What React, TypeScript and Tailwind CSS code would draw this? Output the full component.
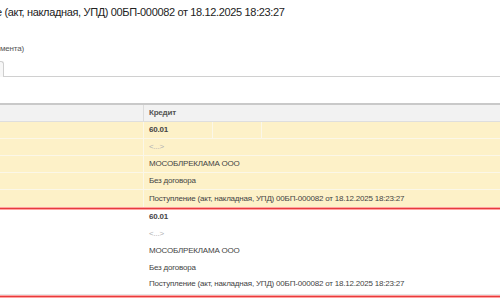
import React from 'react';

const doc = 'Поступление (акт, накладная, УПД) 00БП-000082 от 18.12.2025 18:23:27';

function Row({ children, yellow, last }: { children: React.ReactNode; yellow?: boolean; last?: boolean }) {
  return (
    <div className={`flex h-[17px] ${yellow && !last ? 'border-b border-[#fbf7e8]' : ''} ${!yellow && last ? 'border-b border-[#e6e6e6]' : ''}`}>
      <div className={`w-[144px] shrink-0 ${yellow ? 'border-r border-[#fbf7e8]' : ''}`} />
      <div className={`flex flex-1 items-center ${yellow ? '' : 'pb-[4px]'}`}>{children}</div>
    </div>
  );
}

function Entry({ yellow }: { yellow?: boolean }) {
  return (
    <div className={yellow ? 'bg-[#fdf1c8]' : 'bg-white'}>
      <Row yellow={yellow}>
        <div className={`flex h-full w-[69px] items-center pl-[5px] font-bold ${yellow ? 'border-r border-[#fbf7e8]' : ''}`}>60.01</div>
        <div className={`h-full w-[49px] ${yellow ? 'border-r border-[#fbf7e8]' : ''}`} />
      </Row>
      <Row yellow={yellow}>
        <span className="pl-[5px] text-[#b0b0b0]">&lt;...&gt;</span>
      </Row>
      <Row yellow={yellow}>
        <span className="pl-[5px]">МОСОБЛРЕКЛАМА ООО</span>
      </Row>
      <Row yellow={yellow}>
        <span className="pl-[5px]">Без договора</span>
      </Row>
      <Row yellow={yellow} last>
        <span className="pl-[5px]">{doc}</span>
      </Row>
    </div>
  );
}

export default function App() {
  return (
    <div className="h-[300px] w-[500px] overflow-hidden bg-white font-[family-name:'Liberation_Sans',Arial,sans-serif] text-[#333]">
      <div className="flex h-[25px] items-center whitespace-nowrap text-[11px] tracking-[-0.35px] text-[#222]">
        <span className="ml-[-4px]">е (акт, накладная, УПД) 00БП-000082 от 18.12.2025 18:23:27</span>
      </div>
      <div className="mt-[18px] h-[12px] text-[8px] leading-[12px] tracking-[-0.2px] text-[#555]">мента)</div>
      <div className="mt-[5px] flex h-[17px] border-b border-[#d0d0d0]">
        <div className="mt-[1px] h-[16px] w-[4px] rounded-tr-[3px] border-r border-t border-[#cfcfcf] bg-[#f7f7f7]" />
      </div>
      <div className="mt-[26px] text-[8px] tracking-[-0.2px] text-[#444]">
        <div className="flex h-[19px] border-t-2 border-b border-t-[#c9c9c9] border-b-[#dedede] bg-[#f2f2f2]">
          <div className="w-[144px] shrink-0 border-r border-[#dcdcdc]" />
          <div className="flex items-center pl-[5px] font-bold text-[#555]">Кредит</div>
        </div>
        <Entry yellow />
        <div className="h-[3px] border-y border-[#ffa3a3] bg-[#e63c3c]" />
        <Entry />
        <div className="h-[3px] border-y border-[#ffa3a3] bg-[#e63c3c]" />
      </div>
    </div>
  );
}
